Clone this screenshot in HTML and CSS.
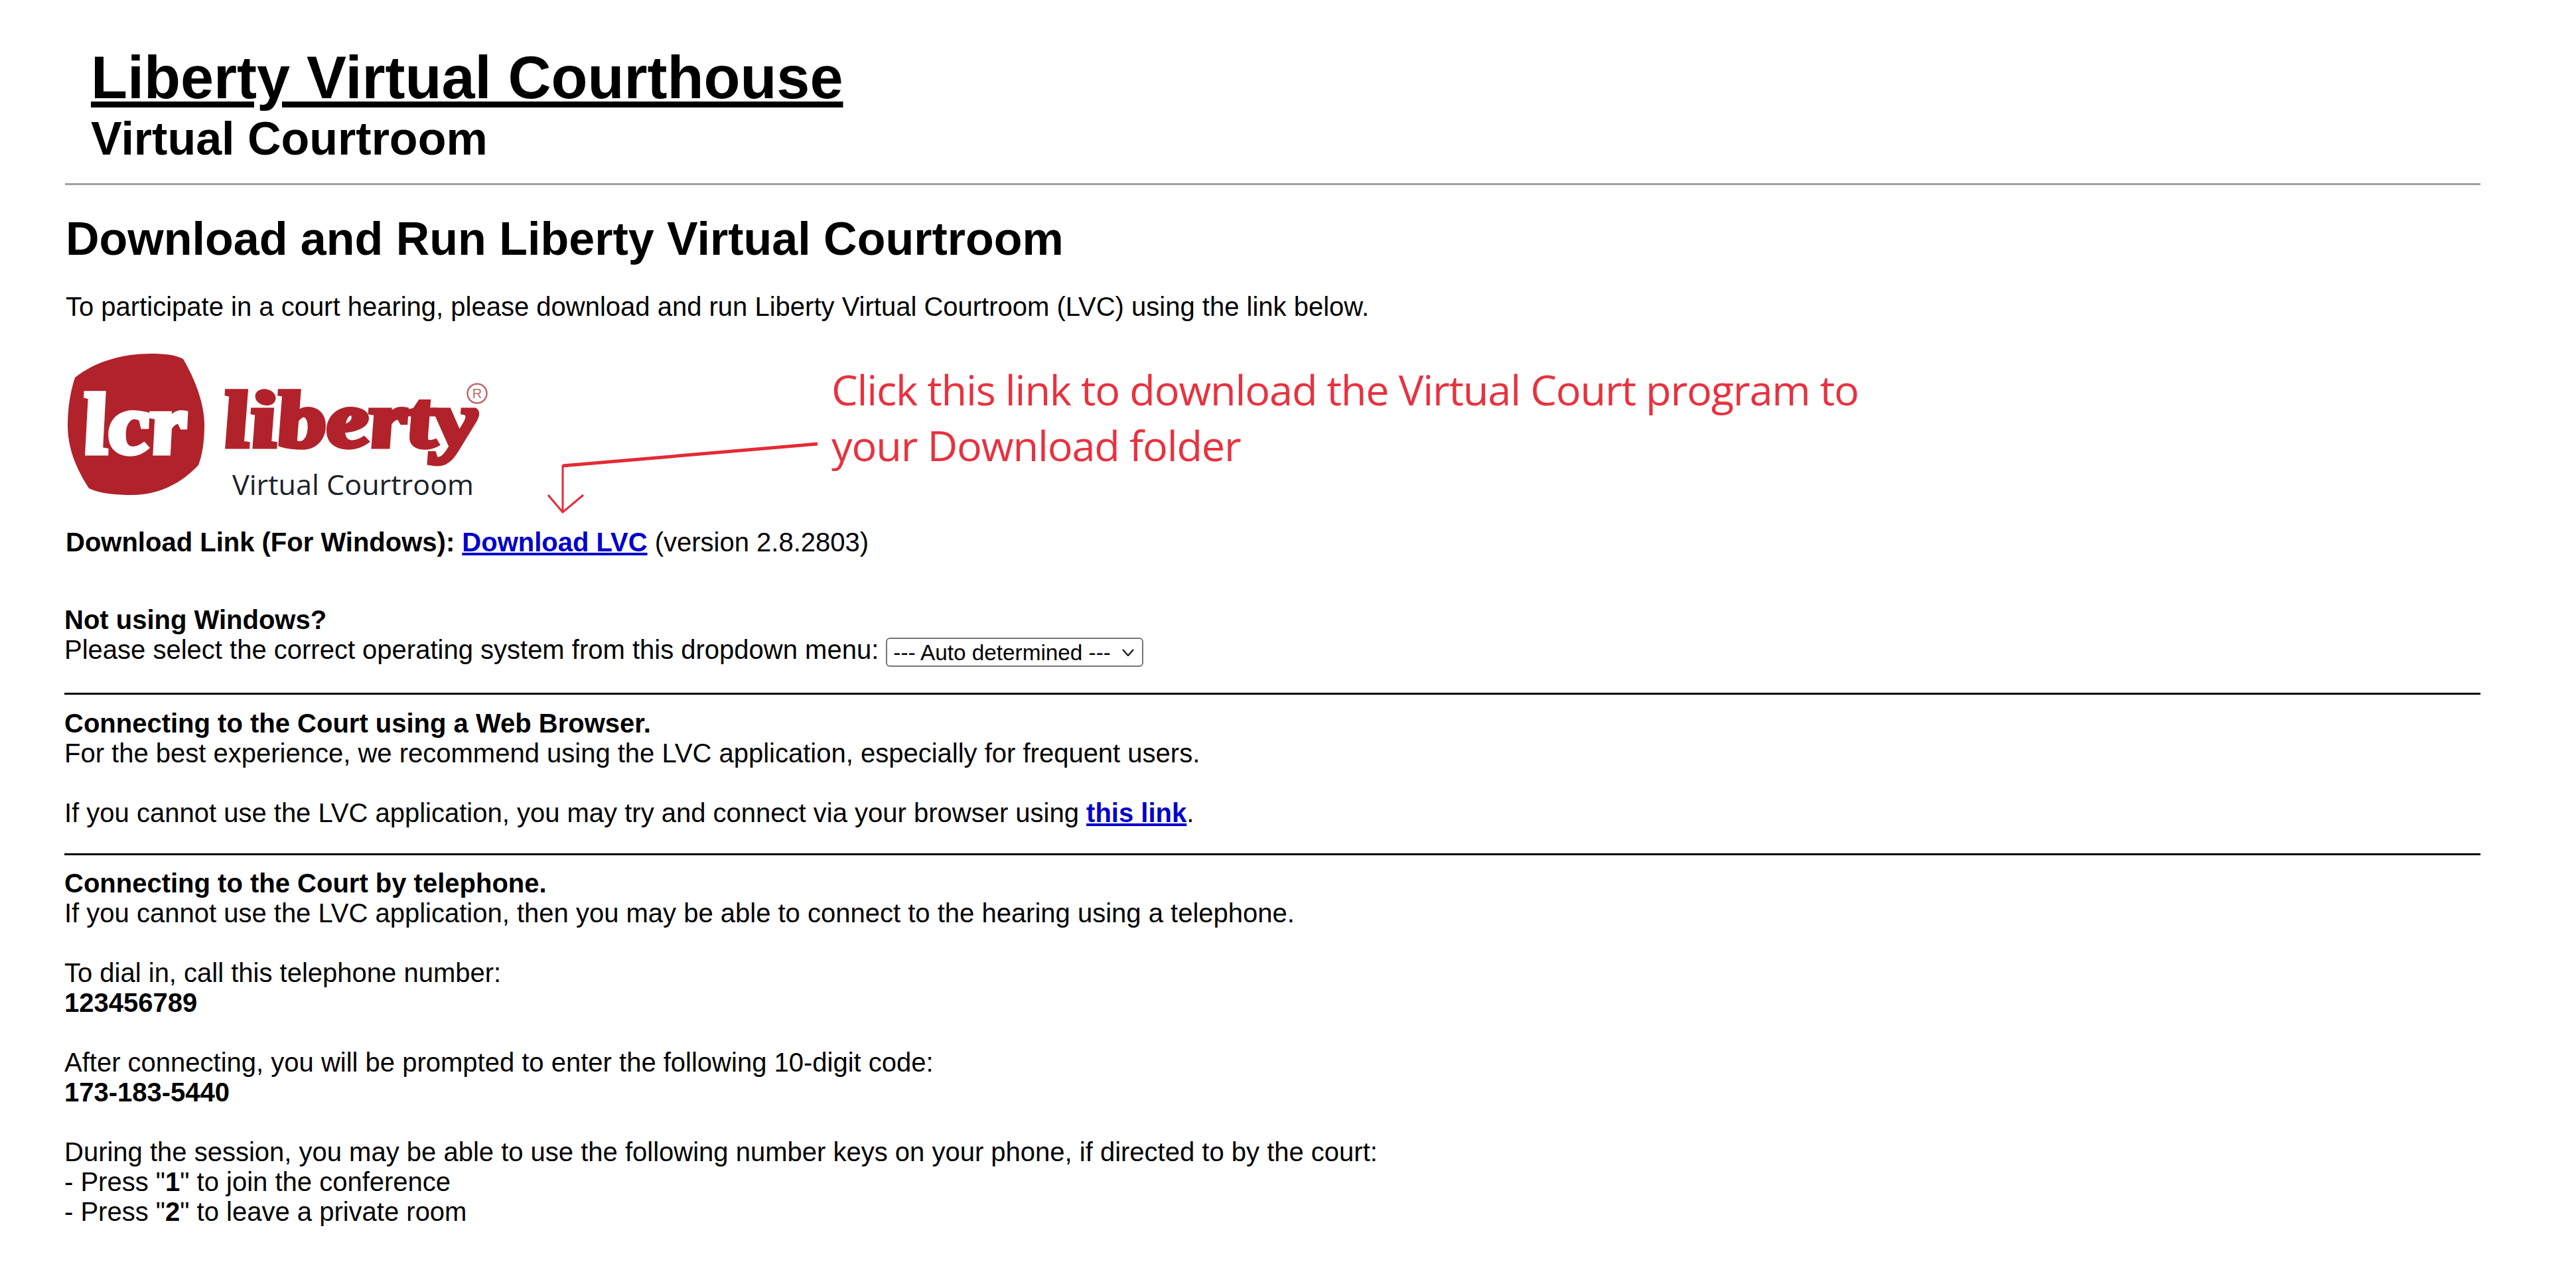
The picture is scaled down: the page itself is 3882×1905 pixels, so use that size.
FILE: index.html
```html
<!DOCTYPE html>
<html lang="en">
<head>
  <meta charset="UTF-8">
  <title>Liberty Virtual Courthouse - Virtual Courtroom</title>
  <link rel="stylesheet" href="styles.css">
</head>
<body>
  <header class="page-header">
    <h1>Liberty Virtual Courthouse</h1>
    <div class="subtitle">Virtual Courtroom</div>
  </header>
  <hr class="header-rule">

  <main>
    <section class="download">
      <h2>Download and Run Liberty Virtual Courtroom</h2>
      <p class="intro">To participate in a court hearing, please download and run Liberty Virtual Courtroom (LVC) using the link below.</p>

      <!-- Logo -->
      <svg class="logo" viewBox="0 0 660 250" role="img" aria-label="LCR Liberty Virtual Courtroom">
        <path fill="#b1222b" d="M14 49 C45 24 88 13 128 13 C150 13 165 15 177 21 C195 52 209 88 209 121 C209 145 206 165 200 181 C175 208 140 226 101 226 C75 226 52 224 35 216 C15 185 3 155 3 121 C3 95 7 70 14 49 Z"/>
        <text class="logo-mark" x="7" y="163" transform="skewX(8)" textLength="158" lengthAdjust="spacingAndGlyphs">lcr</text>
        <text class="logo-word" x="220" y="153" transform="skewX(8)" textLength="384" lengthAdjust="spacingAndGlyphs">liberty</text>
        <circle cx="620" cy="73" r="14.5" fill="none" stroke="#c2686f" stroke-width="2.5"/>
        <text class="logo-reg" x="620" y="80" text-anchor="middle">R</text>
        <text class="logo-sub" x="251" y="226" textLength="364" lengthAdjust="spacingAndGlyphs">Virtual Courtroom</text>
      </svg>

      <p class="download-link"><strong>Download Link (For Windows):</strong> <a href="#"><strong>Download LVC</strong></a> (version 2.8.2803)</p>

      <!-- Red note pointing at the link -->
      <div class="note">Click this link to download the Virtual Court program to<br>your Download folder</div>
      <svg class="note-arrow" viewBox="0 0 420 120">
        <path d="M407 5 L23 38" fill="none" stroke="#e52a36" stroke-width="5"/>
        <path d="M23 37 V108 M1 82 L23 108 L54 82" fill="none" stroke="#e52a36" stroke-width="3"/>
      </svg>
    </section>

    <div class="os-select">
      <strong>Not using Windows?</strong><br>
      Please select the correct operating system from this dropdown menu:
      <span class="select-wrap">
        <select>
          <option>--- Auto determined ---</option>
        </select>
        <svg class="chevron" viewBox="0 0 18 11"><path d="M1 1 L9 10 L17 1" fill="none" stroke="#222" stroke-width="2.5"/></svg>
      </span>
    </div>
    <hr class="rule">

    <div>
      <strong>Connecting to the Court using a Web Browser.</strong><br>
      For the best experience, we recommend using the LVC application, especially for frequent users.<br>
      <br>
      If you cannot use the LVC application, you may try and connect via your browser using <a href="#"><strong>this link</strong></a>.
    </div>
    <hr class="rule">

    <div>
      <strong>Connecting to the Court by telephone.</strong><br>
      If you cannot use the LVC application, then you may be able to connect to the hearing using a telephone.<br>
      <br>
      To dial in, call this telephone number:<br>
      <strong>123456789</strong><br>
      <br>
      After connecting, you will be prompted to enter the following 10-digit code:<br>
      <strong>173-183-5440</strong><br>
      <br>
      During the session, you may be able to use the following number keys on your phone, if directed to by the court:<br>
      - Press "<strong>1</strong>" to join the conference<br>
      - Press "<strong>2</strong>" to leave a private room
    </div>
  </main>
</body>
</html>
```

FILE: styles.css
```css
/* General Styles */
html, body {
  height: 1905px;
  overflow: hidden;
}

body {
  font-family: "Liberation Sans", Arial, sans-serif;
  font-size: 40px;
  line-height: 45px;
  margin: 0;
  padding: 72px 144px 0 97px;
  background-color: white;
  color: black;
}

a {
  color: #0000cc;
}

/* Header */
.page-header {
  padding-left: 40px;
}

h1 {
  font-size: 90px;
  line-height: 90px;
  margin: 0 0 10px;
  text-decoration: underline;
}

.subtitle {
  font-size: 70px;
  line-height: 74px;
  font-weight: bold;
}

.header-rule {
  height: 3px;
  border: none;
  background-color: #a0a0a0;
  margin: 30px 0 0 1px;
}

/* Download section */
.download {
  position: relative;
  padding-left: 2px;
}

h2 {
  font-size: 70px;
  line-height: 80px;
  margin: 41px 0 0;
}

.intro {
  margin: 40px 0 0;
}

.logo {
  display: block;
  width: 660px;
  height: 250px;
  margin: 35px 0 0;
}

.logo-mark {
  font-family: "Liberation Serif", serif;
  font-style: italic;
  font-weight: bold;
  font-size: 130px;
  fill: white;
  stroke: white;
  stroke-width: 7px;
}

.logo-word {
  font-family: "Liberation Serif", serif;
  font-style: italic;
  font-weight: bold;
  font-size: 120px;
  fill: #b1222b;
  stroke: #b1222b;
  stroke-width: 7px;
}

.logo-reg {
  font-family: "Liberation Sans", sans-serif;
  font-size: 20px;
  fill: #c2686f;
}

.logo-sub {
  font-family: "Open Sans", sans-serif;
  font-size: 42px;
  fill: #1c2228;
}

.download-link {
  margin: 24.5px 0 0;
}

.note {
  position: absolute;
  left: 1156px;
  top: 225px;
  font-family: "Open Sans", sans-serif;
  font-size: 63px;
  line-height: 84px;
  letter-spacing: -1.15px;
  white-space: nowrap;
  color: #e8323f;
}

.note-arrow {
  position: absolute;
  left: 728px;
  top: 344px;
  width: 420px;
  height: 120px;
}

/* Text blocks */
.os-select {
  margin-top: 72px;
  padding-bottom: 1px;
}

.select-wrap {
  position: relative;
  display: inline-block;
  vertical-align: -2px;
  line-height: 0;
}

select {
  appearance: none;
  width: 388px;
  height: 44px;
  padding: 0 0 0 9px;
  font-family: "Liberation Sans", Arial, sans-serif;
  font-size: 33.3px;
  color: black;
  background-color: white;
  border: 2.5px solid #767676;
  border-radius: 6px;
}

.chevron {
  position: absolute;
  right: 14px;
  top: 17px;
  width: 18px;
  height: 11px;
}

.rule {
  height: 3px;
  border: none;
  background-color: black;
  margin: 38px 0 20.5px;
}
```
